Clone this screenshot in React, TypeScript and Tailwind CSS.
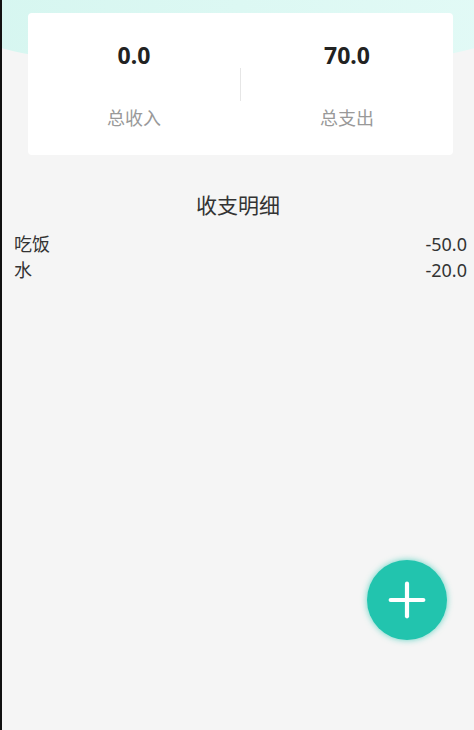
import { Plus } from 'lucide-react'

const records = [
  { name: '吃饭', amount: '-50.0' },
  { name: '水', amount: '-20.0' },
]

export default function App() {
  return (
    <div
      className="relative h-[730px] w-[474px] overflow-hidden border-l-2 border-[#111] bg-[#f5f5f5] text-[#333]"
      style={{ fontFamily: '"Noto Sans", "Noto Sans CJK SC", sans-serif' }}
    >
      {/* teal header backdrop */}
      <div className="absolute -left-6 -right-6 top-0 h-[68px] rounded-b-[50%] bg-gradient-to-r from-[#d6f6f0] to-[#e2faf6]" />

      <div className="relative flex flex-col">
        <div className="ml-[26px] mr-[21px] mt-[13px] flex h-[142px] items-stretch rounded bg-white">
          <div className="flex flex-1 flex-col items-center pt-[27px]">
            <span className="text-[23px] font-bold leading-[30px] text-[#222]">0.0</span>
            <span className="mt-[36px] text-[18px] leading-[24px] text-[#999]">总收入</span>
          </div>
          <div className="mt-[55px] h-[33px] w-px bg-[#e6e6e6]" />
          <div className="flex flex-1 flex-col items-center pt-[27px]">
            <span className="text-[23px] font-bold leading-[30px] text-[#222]">70.0</span>
            <span className="mt-[36px] text-[18px] leading-[24px] text-[#999]">总支出</span>
          </div>
        </div>

        <div className="mt-[36px] text-center text-[21px] leading-[28px] text-[#333]">收支明细</div>

        <div className="mt-[12px] flex flex-col pl-[12px] pr-[7px]">
          {records.map((r) => (
            <div key={r.name} className="flex justify-between text-[18px] leading-[26px] text-[#333]">
              <span>{r.name}</span>
              <span>{r.amount}</span>
            </div>
          ))}
        </div>
      </div>

      <button
        type="button"
        aria-label="add"
        className="absolute left-[365px] top-[560px] flex h-[80px] w-[80px] items-center justify-center rounded-full bg-[#22c4ae] text-white shadow-[0_0_6px_rgba(34,196,174,0.7)]"
      >
        <Plus size={56} strokeWidth={1.8} />
      </button>
    </div>
  )
}
